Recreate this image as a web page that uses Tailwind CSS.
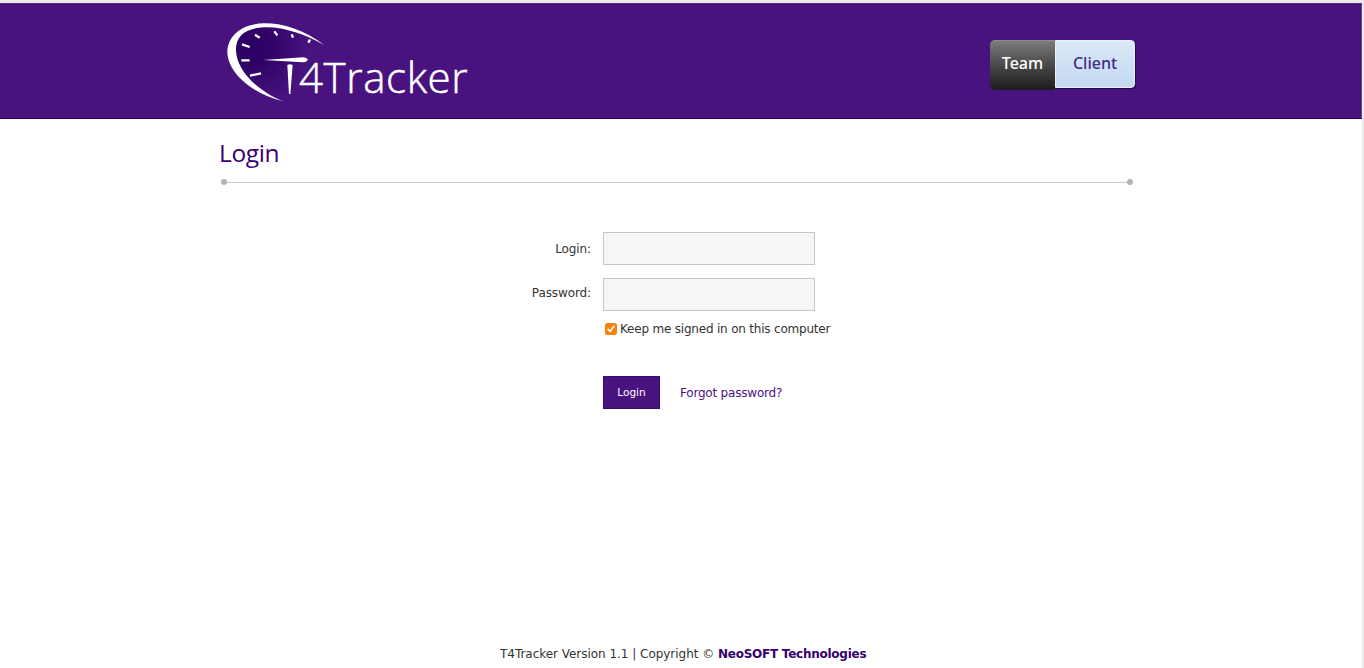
<!DOCTYPE html>
<html lang="en">
<head>
<meta charset="utf-8">
<title>T4Tracker - Login</title>
<script src="https://cdn.jsdelivr.net/npm/@tailwindcss/browser@4"></script>
</head>
<body class="h-[668px] overflow-hidden bg-[#ececec] pt-[3px] text-[12px] text-[#333]" style="font-family:'DejaVu Sans',Verdana,sans-serif">
<div class="flex h-[665px] w-[1362px] flex-col bg-white">
  <header class="h-[116px] shrink-0 border-y border-t-[#5c2a8c] border-b-[#38006b] border-r border-r-[#6a419a] bg-[#48127f]">
    <div class="ml-[215px] flex w-[921px] items-start justify-between">
      <svg class="mt-[6px]" width="260" height="100" viewBox="0 0 780 300" role="img" aria-label="T4Tracker">
        <defs>
          <radialGradient id="dial" gradientUnits="userSpaceOnUse" cx="105" cy="115" r="175">
            <stop offset="0" stop-color="#2b0063"/><stop offset=".35" stop-color="#300466"/><stop offset="1" stop-color="#48127f"/>
          </radialGradient>
        </defs>
        <path fill="url(#dial)" d="M328 104C250 60 190 45 145 45C80 45 50 90 50 130C55 190 120 250 200 272Z"/>
        <path fill="#fff" d="M328 105C270 61 204 39 146 40C76 42 37 82 37 127C39 190 114 253 204 274C131 245 64 183 63 121C61 81 89 54 146 52C203 49 268 72 328 105Z"/>
        <g stroke="#fff" stroke-width="7" stroke-linecap="butt">
          <path d="M120 74L134 83M178 64L187 76M230 73L234 83M285 89L280 98M81 103L104 111M79 151L104 151M105 197L138 190"/>
        </g>
        <path fill="#fff" d="M145 150L264 142Q273 142 279 149Q273 157 264 157Z"/>
        <path fill="#fff" d="M217 165Q225 160 233 165L226 252L222 252Z"/>
        <text x="252" y="248" textLength="506" lengthAdjust="spacing" fill="#fff" stroke="#fff" stroke-width="1.5" font-size="126" font-weight="300" font-family="'Open Sans','Noto Sans',sans-serif">4Tracker</text>
      </svg>
      <nav class="mt-[36px] flex h-[50px] w-[146px] text-[16px] leading-[45px] font-medium" style="font-family:'Noto Sans','Open Sans',sans-serif">
        <a class="h-[50px] w-[65px] rounded-l-[5px] border-t border-t-[#8b8b8b] bg-gradient-to-b from-[#7b7b7b] to-[#1c1c1c] text-center text-white">Team</a>
        <a class="h-[48px] w-[80px] rounded-r-[4px] border border-[#e2f3ff] bg-gradient-to-b from-[#dce9f7] to-[#c2d8f1] text-center leading-[45px] text-[#41298a] shadow-[1px_1px_0_#28074f]">Client</a>
      </nav>
    </div>
  </header>
  <main class="ml-[220px] w-[914px] flex-1">
    <h1 class="mt-[17px] h-[34px] text-[24.5px] leading-[34px] tracking-[-0.1px] text-[#3b0078]" style="font-family:'Open Sans','Noto Sans',sans-serif"><span class="-ml-px tracking-[-0.4px]">Login</span></h1>
    <div class="mt-[9px] ml-px flex h-[6px] w-[912px] items-center">
      <span class="size-[6px] rounded-full bg-[#b3b3b3]"></span><span class="h-px flex-1 bg-[#cdcdcd]"></span><span class="size-[6px] rounded-full bg-[#b3b3b3]"></span>
    </div>
    <form class="mt-[47px]">
      <div class="flex h-[46px]">
        <label for="login" class="w-[371px] pt-[8px] text-right leading-[18px] tracking-[-0.1px]">Login:</label>
        <input id="login" type="text" class="ml-[12px] h-[33px] w-[212px] border border-[#c6c6c6] bg-[#f6f6f6]">
      </div>
      <div class="flex h-[33px]">
        <label for="pw" class="w-[371px] pt-[6px] text-right leading-[18px] tracking-[-0.1px]">Password:</label>
        <input id="pw" type="password" class="ml-[12px] h-[33px] w-[212px] border border-[#c6c6c6] bg-[#f6f6f6]">
      </div>
      <label class="mt-[9px] ml-[385px] flex h-[18px] items-center whitespace-nowrap">
        <svg width="12" height="12" viewBox="0 0 12 12"><rect width="12" height="12" rx="2.5" fill="#f98308"/><path d="M3.2 6.4L5.1 8.5L8.8 3.3" fill="none" stroke="#fff" stroke-width="1.6" stroke-linecap="round" stroke-linejoin="round"/></svg>
        <span class="ml-[3px] tracking-[-0.2px]">Keep me signed in on this computer</span>
      </label>
      <div class="mt-[38px] ml-[383px] flex h-[33px] items-center">
        <button type="button" class="h-[33px] w-[57px] border border-[#380b6d] bg-[#48127f] pt-px text-[10.5px] text-white">Login</button>
        <a class="ml-[20px] tracking-[-0.2px] text-[#4b1285]">Forgot password?</a>
      </div>
    </form>
  </main>
  <footer class="mb-[5px] flex h-[18px] shrink-0 pl-[500px] leading-[18px] whitespace-pre"><span class="tracking-[-0.03px]">T4Tracker Version 1.1 | Copyright © </span><b class="tracking-[-0.25px] text-[#34006f]">NeoSOFT Technologies</b></footer>
</div>
</body>
</html>
